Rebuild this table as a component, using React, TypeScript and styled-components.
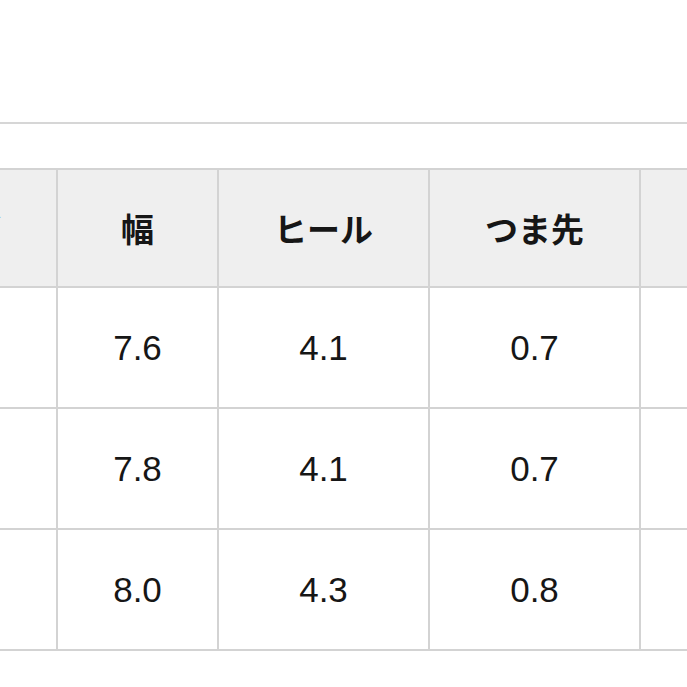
import React from "react";
import styled, { createGlobalStyle } from "styled-components";

const Global = createGlobalStyle`
  html, body { margin: 0; padding: 0; background: #ffffff; }
  body { overflow: hidden; font-family: "Liberation Sans", "Noto Sans CJK JP", sans-serif; }
`;

const Page = styled.div`
  width: 687px;
  height: 687px;
  overflow: hidden;
  background: #ffffff;
`;

const TopBar = styled.div`
  height: 122px;
  border-bottom: 2px solid #d6d6d6;
`;

const Grid = styled.div`
  display: grid;
  grid-template-columns: 208px 159px 209px 209px 209px;
  grid-template-rows: 116px 119px 119px 119px;
  gap: 2px;
  padding: 2px;
  background: #d3d3d3;
  margin: 44px 0 0 -154px;
  width: max-content;
`;

const Cell = styled.div<{ $head?: boolean }>`
  display: flex;
  align-items: center;
  justify-content: center;
  background: ${(p) => (p.$head ? "#efefef" : "#ffffff")};
  color: #161616;
  font-family: ${(p) =>
    p.$head
      ? `"Noto Sans CJK JP", sans-serif`
      : `"Liberation Sans", "Noto Sans CJK JP", sans-serif`};
  font-size: ${(p) => (p.$head ? "33px" : "35px")};
  font-weight: ${(p) => (p.$head ? 700 : 400)};
  white-space: nowrap;
`;

const header = ["サイズ", "幅", "ヒール", "つま先", "甲高"];
const rows = [
  ["22.5", "7.6", "4.1", "0.7", "8.5"],
  ["23.0", "7.8", "4.1", "0.7", "8.6"],
  ["23.5", "8.0", "4.3", "0.8", "8.8"],
];

export default function App() {
  return (
    <Page>
      <Global />
      <TopBar />
      <Grid>
        {header.map((h) => (
          <Cell $head key={h}>
            {h}
          </Cell>
        ))}
        {rows.map((r, i) =>
          r.map((v, j) => <Cell key={`${i}-${j}`}>{v}</Cell>)
        )}
      </Grid>
    </Page>
  );
}
